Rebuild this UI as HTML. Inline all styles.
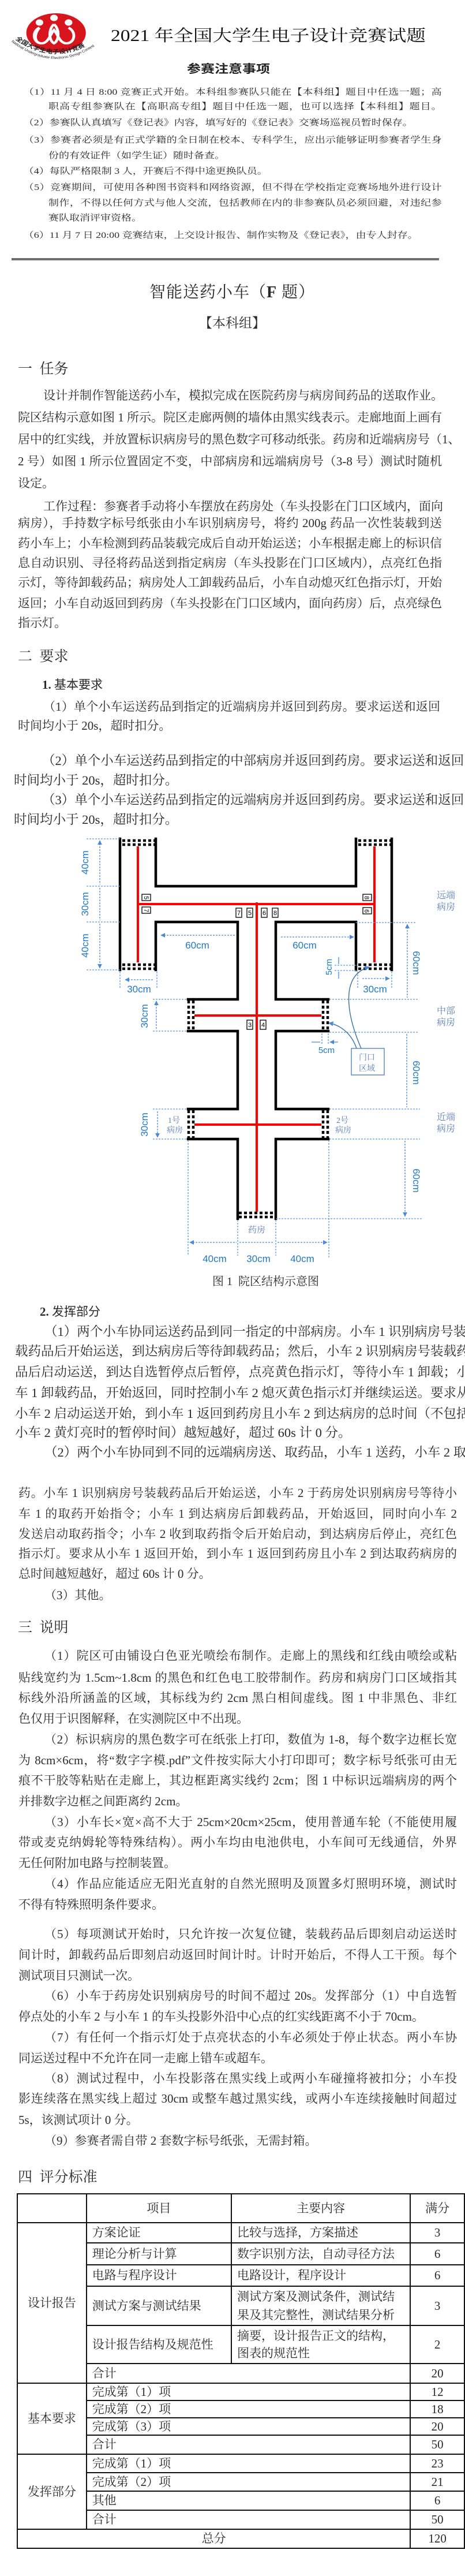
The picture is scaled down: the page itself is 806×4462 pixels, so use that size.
<!DOCTYPE html>
<html><head><meta charset="utf-8">
<style>
html,body{margin:0;padding:0;background:#fff;}
body{width:806px;height:4462px;position:relative;overflow:hidden;color:#2a2a2a;font-family:"Liberation Serif","Noto Serif CJK SC",serif;}
.t{position:absolute;white-space:nowrap;font-size:21px;line-height:22px;}
.j{text-align:justify;text-align-last:justify;white-space:nowrap;}
.o{font-size:22.5px;}
.h{position:absolute;white-space:nowrap;font-size:25px;line-height:26px;}
#hdr{position:absolute;left:0;top:0;width:806px;height:440px;transform:scaleX(1.2);transform-origin:0 0;}
#hdr .i{position:absolute;white-space:nowrap;font-size:15px;line-height:16px;}
table{position:absolute;left:29px;top:3799px;border-collapse:collapse;table-layout:fixed;font-size:21px;}
td{border:2px solid #111;padding:0 0 0 9px;line-height:27px;}
td.c{text-align:center;padding:0;}
</style></head><body>

<div id="hdr">
<svg style="position:absolute;left:0;top:0" width="170" height="110" viewBox="0 0 170 110">
 <ellipse cx="81" cy="57" rx="43" ry="34" fill="#d8141c"/>
 <circle cx="57" cy="39" r="5.5" fill="#fff"/><circle cx="78" cy="31" r="5.5" fill="#fff"/><circle cx="99" cy="39" r="5.5" fill="#fff"/>
 <path d="M57 48 C45 55,48 75,60 75 C70 75,72 60,78 52 C84 60,86 75,96 75 C108 75,111 55,99 48 M60 75 C50 75,48 60,57 48 M78 42 C70 50,70 70,78 75 C86 70,86 50,78 42" fill="none" stroke="#fff" stroke-width="4"/>
 <defs><path id="arc1" d="M22 68 Q81 118 140 68"/><path id="arc2" d="M16 72 Q81 132 146 72"/></defs>
 <text font-family="Noto Sans CJK SC,sans-serif" font-size="10" font-weight="bold" fill="#222"><textPath href="#arc1">全国大学生电子设计竞赛</textPath></text>
 <text font-family="Liberation Sans,sans-serif" font-size="6" fill="#222"><textPath href="#arc2">National Undergraduate Electronic Design Contest</textPath></text>
</svg>
<div class="i" style="left:160px;top:48px;font-size:28px;line-height:30px;color:#111">2021 年全国大学生电子设计竞赛试题</div>
<div class="i" style="left:270px;top:108px;font-size:20px;line-height:20px;font-family:'Noto Sans CJK SC',sans-serif;font-weight:bold;color:#222">参赛注意事项</div>
<div class="i j" style="left:34px;top:152px;width:604px">（1）11 月 4 日 8:00 竞赛正式开始。本科组参赛队只能在【本科组】题目中任选一题；高</div>
<div class="i j" style="left:70px;top:177px;width:568px">职高专组参赛队在【高职高专组】题目中任选一题，也可以选择【本科组】题目。</div>
<div class="i" style="left:34px;top:205px">（2）参赛队认真填写《登记表》内容，填写好的《登记表》交赛场巡视员暂时保存。</div>
<div class="i j" style="left:34px;top:235px;width:604px">（3）参赛者必须是有正式学籍的全日制在校本、专科学生，应出示能够证明参赛者学生身</div>
<div class="i" style="left:70px;top:262px">份的有效证件（如学生证）随时备查。</div>
<div class="i" style="left:34px;top:289px">（4）每队严格限制 3 人，开赛后不得中途更换队员。</div>
<div class="i j" style="left:34px;top:317px;width:604px">（5）竞赛期间，可使用各种图书资料和网络资源，但不得在学校指定竞赛场地外进行设计</div>
<div class="i j" style="left:70px;top:344px;width:568px">制作，不得以任何方式与他人交流，包括教师在内的非参赛队员必须回避，对违纪参</div>
<div class="i" style="left:70px;top:370px">赛队取消评审资格。</div>
<div class="i" style="left:34px;top:400px">（6）11 月 7 日 20:00 竞赛结束，上交设计报告、制作实物及《登记表》，由专人封存。</div>
</div>
<div style="position:absolute;left:20px;top:447px;width:741px;height:4px;background:#6e6e6e"></div>

<div class="t" style="left:259px;top:492px;font-size:28px;line-height:30px;letter-spacing:1px">智能送药小车（<b>F</b> 题）</div>
<div class="t" style="left:345px;top:548px;font-size:23px;line-height:24px">【本科组】</div>
<div class="h" style="left:31px;top:627px">一&nbsp; 任务</div>

<div class="t j" style="left:75px;top:674px;width:691px">设计并制作智能送药小车，模拟完成在医院药房与病房间药品的送取作业。</div>
<div class="t j" style="left:31px;top:712px;width:735px">院区结构示意如图 1 所示。院区走廊两侧的墙体由黑实线表示。走廊地面上画有</div>
<div class="t j" style="left:31px;top:750px;width:735px">居中的红实线，并放置标识病房号的黑色数字可移动纸张。药房和近端病房号（1、</div>
<div class="t j" style="left:31px;top:788px;width:735px">2 号）如图 1 所示位置固定不变，中部病房和远端病房号（3-8 号）测试时随机</div>
<div class="t" style="left:31px;top:826px">设定。</div>

<div class="t j" style="left:75px;top:866px;width:691px">工作过程：参赛者手动将小车摆放在药房处（车头投影在门口区域内，面向</div>
<div class="t j" style="left:31px;top:895px;width:735px">病房），手持数字标号纸张由小车识别病房号，将约 200g 药品一次性装载到送</div>
<div class="t j" style="left:31px;top:930px;width:735px">药小车上；小车检测到药品装载完成后自动开始运送；小车根据走廊上的标识信</div>
<div class="t j" style="left:31px;top:964px;width:735px">息自动识别、寻径将药品送到指定病房（车头投影在门口区域内），点亮红色指</div>
<div class="t j" style="left:31px;top:998px;width:735px">示灯，等待卸载药品；病房处人工卸载药品后，小车自动熄灭红色指示灯，开始</div>
<div class="t j" style="left:31px;top:1034px;width:735px">返回；小车自动返回到药房（车头投影在门口区域内，面向药房）后，点亮绿色</div>
<div class="t" style="left:31px;top:1068px">指示灯。</div>

<div class="h" style="left:31px;top:1125px">二&nbsp; 要求</div>
<div class="t" style="left:73px;top:1175px;font-family:'Liberation Serif','Noto Sans CJK SC',sans-serif"><b>1.</b> 基本要求</div>
<div class="t j" style="left:75px;top:1213px;width:688px">（1）单个小车运送药品到指定的近端病房并返回到药房。要求运送和返回</div>
<div class="t" style="left:31px;top:1246px">时间均小于 20s，超时扣分。</div>
<div class="t o" style="left:73px;top:1307px">（2）单个小车运送药品到指定的中部病房并返回到药房。要求运送和返回</div>
<div class="t o" style="left:24px;top:1341px">时间均小于 20s，超时扣分。</div>
<div class="t o" style="left:73px;top:1375px">（3）单个小车运送药品到指定的远端病房并返回到药房。要求运送和返回</div>
<div class="t o" style="left:24px;top:1409px">时间均小于 20s，超时扣分。</div>

<svg style="position:absolute;left:0;top:0" width="806" height="2240" viewBox="0 0 806 2240">
<defs>
<marker id="a" viewBox="0 0 10 10" refX="9" refY="5" markerWidth="6" markerHeight="6" orient="auto-start-reverse"><path d="M0 0L10 5L0 10z" fill="#4a8ad4"/></marker>
</defs>
<g stroke="#000" stroke-width="4.5" fill="none" stroke-linecap="square">
<path d="M208 1453V1680M679 1453V1680"/>
<path d="M270 1453V1535H617V1453"/>
<path d="M270 1680V1597H412V1731H326"/>
<path d="M617 1680V1597H478V1731H569"/>
<path d="M326 1786H412V1921H326M569 1786H478V1921H569"/>
<path d="M326 1973H412V2111M569 1973H478V2111"/>
</g>
<g stroke="#000" stroke-width="4.5" stroke-dasharray="5 4" fill="none">
<path d="M212 1456H268M212 1463H268M621 1456H677M621 1463H677"/>
<path d="M212 1671H268M212 1678H268M621 1671H677M621 1678H677"/>
<path d="M327 1733V1786M335 1733V1786M560 1733V1786M568 1733V1786"/>
<path d="M327 1923V1973M335 1923V1973M560 1923V1973M568 1923V1973"/>
<path d="M414 2101H476M414 2108H476"/>
</g>
<g stroke="#f00" stroke-width="4" fill="none">
<path d="M239 1466V1667M649 1466V1667M239 1566H649M445 1563V2099M337 1759H557M337 1948H557"/>
</g>
<g font-family="Liberation Sans,sans-serif" font-size="11" text-anchor="middle">
<g stroke="#000" stroke-width="1.3" fill="#fff">
<rect x="246" y="1549" width="15" height="11"/><rect x="246" y="1571" width="15" height="11"/>
<rect x="629" y="1549" width="15" height="11"/><rect x="629" y="1572" width="15" height="11"/>
<rect x="409" y="1573" width="10" height="16"/><rect x="428" y="1573" width="10" height="16"/>
<rect x="453" y="1573" width="10" height="16"/><rect x="472" y="1573" width="10" height="16"/>
<rect x="428" y="1767" width="10" height="16"/><rect x="451" y="1767" width="10" height="16"/>
</g>
<text transform="translate(254 1555) rotate(90)" y="4">5</text>
<text transform="translate(254 1577) rotate(90)" y="4">7</text>
<text transform="translate(636 1555) rotate(90)" y="4">8</text>
<text transform="translate(636 1578) rotate(90)" y="4">6</text>
<text x="414" y="1585">7</text><text x="433" y="1585">5</text><text x="458" y="1585">6</text><text x="477" y="1585">8</text>
<text x="433" y="1779">3</text><text x="456" y="1779">4</text>
</g>
<g stroke="#5b9bd5" stroke-width="1.3" fill="none" stroke-dasharray="3 2">
<path d="M150 1453H208M150 1535H208M150 1597H208M150 1680H208"/>
<path d="M208 1683V1712M272 1683V1712M620 1683V1712M679 1683V1712"/>
<path d="M617 1598H722M571 1731H726M265 1731H324M265 1786H324M571 1788H726M571 1921H728M265 1921H324M265 1973H324M571 1973H728M478 2111H732"/>
<path d="M326 1975V2175M412 2113V2175M478 2113V2175M570 1975V2178"/>
<path d="M580 1672H618M580 1681H618M558 1790V1810M569 1790V1810"/>
</g>
<g stroke="#4a8ad4" stroke-width="1.3" fill="none" stroke-dasharray="3 2" marker-start="url(#a)" marker-end="url(#a)">
<path d="M173 1456V1532M173 1538V1594M173 1600V1677"/>
<path d="M279 1620H409M487 1623H613"/>
<path d="M217 1697H265M628 1695H675"/>
<path d="M706 1601V1728M705 1791V1918M702 1976V2107"/>
<path d="M271 1734V1783M273 1925V1970"/>
<path d="M329 2152H410M415 2152H475M481 2152H567"/>
</g>
<g stroke="#4a8ad4" stroke-width="1.3" fill="none" marker-end="url(#a)">
<path d="M587 1658V1670M587 1695V1683M540 1805H555M586 1805H572"/>
</g>
<g stroke="#3a6ea5" stroke-width="1.4" fill="none" marker-end="url(#a)">
<path d="M626 1816C602 1760 588 1690 640 1675"/>
<path d="M618 1816C610 1792 592 1776 570 1772"/>
</g>
<rect x="609" y="1816" width="57" height="46" fill="#fff" stroke="#4a7ac0" stroke-width="1.3"/>
<g font-family="Liberation Serif,Noto Serif CJK SC,serif" font-size="14" fill="#5a7fb8">
<text x="622" y="1836">门口</text><text x="622" y="1855">区域</text>
<text x="291" y="1945">1号</text><text x="289" y="1962">病房</text>
<text x="583" y="1945">2号</text><text x="581" y="1962">病房</text>
<text x="757" y="1556" font-size="16">远端</text><text x="757" y="1576" font-size="16">病房</text>
<text x="757" y="1756" font-size="16">中部</text><text x="757" y="1776" font-size="16">病房</text>
<text x="757" y="1940" font-size="16">近端</text><text x="757" y="1960" font-size="16">病房</text>
<text x="430" y="2135" font-size="15">药房</text>
</g>
<g font-family="Liberation Sans,sans-serif" font-size="17" fill="#1f78c8" text-anchor="middle">
<text transform="translate(153 1494) rotate(-90)">40cm</text>
<text transform="translate(153 1566) rotate(-90)">30cm</text>
<text transform="translate(153 1638) rotate(-90)">40cm</text>
<text x="342" y="1643">60cm</text><text x="528" y="1643">60cm</text>
<text x="241" y="1719">30cm</text><text x="650" y="1719">30cm</text>
<text transform="translate(575 1675) rotate(-90)" font-size="15">5cm</text>
<text x="566" y="1824" font-size="15">5cm</text>
<text transform="translate(716 1668) rotate(90)">60cm</text>
<text transform="translate(716 1858) rotate(90)">60cm</text>
<text transform="translate(716 2045) rotate(90)">60cm</text>
<text transform="translate(256 1760) rotate(-90)">30cm</text>
<text transform="translate(256 1948) rotate(-90)">30cm</text>
<text x="372" y="2186">40cm</text><text x="448" y="2186">30cm</text><text x="524" y="2186">40cm</text>
</g>
</svg>

<div class="t" style="left:368px;top:2209px;font-size:20px">图 1&nbsp; 院区结构示意图</div>

<div class="t" style="left:69px;top:2261px;font-family:'Liberation Serif','Noto Sans CJK SC',sans-serif"><b>2.</b> 发挥部分</div>
<div class="t o" style="left:77px;top:2296px">（1）两个小车协同运送药品到同一指定的中部病房。小车 1 识别病房号装</div>
<div class="t o" style="left:26px;top:2330px">载药品后开始运送，到达病房后等待卸载药品；然后，小车 2 识别病房号装载药</div>
<div class="t o" style="left:26px;top:2366px">品后启动运送，到达自选暂停点后暂停，点亮黄色指示灯，等待小车 1 卸载；小</div>
<div class="t o" style="left:26px;top:2402px">车 1 卸载药品，开始返回，同时控制小车 2 熄灭黄色指示灯并继续运送。要求从</div>
<div class="t o" style="left:26px;top:2438px">小车 2 启动运送开始，到小车 1 返回到药房且小车 2 到达病房的总时间（不包括</div>
<div class="t o" style="left:26px;top:2471px">小车 2 黄灯亮时的暂停时间）越短越好，超过 60s 计 0 分。</div>
<div class="t o" style="left:77px;top:2505px">（2）两个小车协同到不同的远端病房送、取药品，小车 1 送药，小车 2 取</div>
<div class="t j" style="left:32px;top:2575px;width:760px">药。小车 1 识别病房号装载药品后开始运送，小车 2 于药房处识别病房号等待小</div>
<div class="t j" style="left:32px;top:2611px;width:760px">车 1 的取药开始指令；小车 1 到达病房后卸载药品，开始返回，同时向小车 2</div>
<div class="t j" style="left:32px;top:2646px;width:760px">发送启动取药指令；小车 2 收到取药指令后开始启动，到达病房后停止，亮红色</div>
<div class="t j" style="left:32px;top:2680px;width:760px">指示灯。要求从小车 1 返回开始，到小车 1 返回到药房且小车 2 到达取药病房的</div>
<div class="t" style="left:32px;top:2715px">总时间越短越好，超过 60s 计 0 分。</div>
<div class="t" style="left:77px;top:2752px">（3）其他。</div>

<div class="h" style="left:31px;top:2807px">三&nbsp; 说明</div>
<div class="t j" style="left:77px;top:2857px;width:715px">（1）院区可由铺设白色亚光喷绘布制作。走廊上的黑线和红线由喷绘或粘</div>
<div class="t j" style="left:32px;top:2895px;width:760px">贴线宽约为 1.5cm~1.8cm 的黑色和红色电工胶带制作。药房和病房门口区域指其</div>
<div class="t j" style="left:32px;top:2930px;width:760px">标线外沿所涵盖的区域，其标线为约 2cm 黑白相间虚线。图 1 中非黑色、非红</div>
<div class="t" style="left:32px;top:2966px">色仅用于识图解释，在实测院区中不出现。</div>
<div class="t j" style="left:77px;top:3002px;width:715px">（2）标识病房的黑色数字可在纸张上打印，数值为 1-8，每个数字边框长宽</div>
<div class="t j" style="left:32px;top:3038px;width:760px">为 8cm×6cm，将“数字字模.pdf”文件按实际大小打印即可；数字标号纸张可由无</div>
<div class="t j" style="left:32px;top:3073px;width:760px">痕不干胶等粘贴在走廊上，其边框距离实线约 2cm；图 1 中标识远端病房的两个</div>
<div class="t" style="left:32px;top:3109px">并排数字边框之间距离约 2cm。</div>
<div class="t j" style="left:77px;top:3145px;width:715px">（3）小车长×宽×高不大于 25cm×20cm×25cm，使用普通车轮（不能使用履</div>
<div class="t j" style="left:32px;top:3180px;width:760px">带或麦克纳姆轮等特殊结构）。两小车均由电池供电，小车间可无线通信，外界</div>
<div class="t" style="left:32px;top:3216px">无任何附加电路与控制装置。</div>
<div class="t j" style="left:77px;top:3252px;width:715px">（4）作品应能适应无阳光直射的自然光照明及顶置多灯照明环境，测试时</div>
<div class="t" style="left:32px;top:3288px">不得有特殊照明条件要求。</div>
<div class="t j" style="left:77px;top:3339px;width:715px">（5）每项测试开始时，只允许按一次复位键，装载药品后即刻启动运送时</div>
<div class="t j" style="left:32px;top:3375px;width:760px">间计时，卸载药品后即刻启动返回时间计时。计时开始后，不得人工干预。每个</div>
<div class="t" style="left:32px;top:3411px">测试项目只测试一次。</div>
<div class="t j" style="left:77px;top:3446px;width:715px">（6）小车于药房处识别病房号的时间不超过 20s。发挥部分（1）中自选暂</div>
<div class="t" style="left:32px;top:3482px">停点处的小车 2 与小车 1 的车头投影外沿中心点的红实线距离不小于 70cm。</div>
<div class="t j" style="left:77px;top:3518px;width:715px">（7）有任何一个指示灯处于点亮状态的小车必须处于停止状态。两小车协</div>
<div class="t" style="left:32px;top:3554px">同运送过程中不允许在同一走廊上错车或超车。</div>
<div class="t j" style="left:77px;top:3589px;width:715px">（8）测试过程中，小车投影落在黑实线上或两小车碰撞将被扣分；小车投</div>
<div class="t j" style="left:32px;top:3624px;width:760px">影连续落在黑实线上超过 30cm 或整车越过黑实线，或两小车连续接触时间超过</div>
<div class="t" style="left:32px;top:3661px">5s，该测试项计 0 分。</div>
<div class="t" style="left:77px;top:3697px">（9）参赛者需自带 2 套数字标号纸张，无需封箱。</div>

<div class="h" style="left:31px;top:3759px">四&nbsp; 评分标准</div>

<table>
<colgroup><col style="width:120px"><col style="width:252px"><col style="width:311px"><col style="width:94px"></colgroup>
<tr style="height:50px"><td></td><td class="c">项目</td><td class="c">主要内容</td><td class="c">满分</td></tr>
<tr style="height:35px"><td class="c" rowspan="6">设计报告</td><td>方案论证</td><td>比较与选择，方案描述</td><td class="c">3</td></tr>
<tr style="height:38px"><td>理论分析与计算</td><td>数字识别方法，自动寻径方法</td><td class="c">6</td></tr>
<tr style="height:37px"><td>电路与程序设计</td><td>电路设计，程序设计</td><td class="c">6</td></tr>
<tr style="height:68px"><td>测试方案与测试结果</td><td style="line-height:32px">测试方案及测试条件，测试结<br>果及其完整性，测试结果分析</td><td class="c">3</td></tr>
<tr style="height:66px"><td>设计报告结构及规范性</td><td style="line-height:30px">摘要，设计报告正文的结构，<br>图表的规范性</td><td class="c">2</td></tr>
<tr style="height:34px"><td colspan="2">合计</td><td class="c">20</td></tr>
<tr style="height:30px"><td class="c" rowspan="4">基本要求</td><td colspan="2">完成第（1）项</td><td class="c">12</td></tr>
<tr style="height:30px"><td colspan="2">完成第（2）项</td><td class="c">18</td></tr>
<tr style="height:30px"><td colspan="2">完成第（3）项</td><td class="c">20</td></tr>
<tr style="height:33px"><td colspan="2">合计</td><td class="c">50</td></tr>
<tr style="height:32px"><td class="c" rowspan="4">发挥部分</td><td colspan="2">完成第（1）项</td><td class="c">23</td></tr>
<tr style="height:32px"><td colspan="2">完成第（2）项</td><td class="c">21</td></tr>
<tr style="height:33px"><td colspan="2">其他</td><td class="c">6</td></tr>
<tr style="height:33px"><td colspan="2">合计</td><td class="c">50</td></tr>
<tr style="height:33px"><td colspan="3" class="c">总分</td><td class="c">120</td></tr>
</table>
</body></html>
